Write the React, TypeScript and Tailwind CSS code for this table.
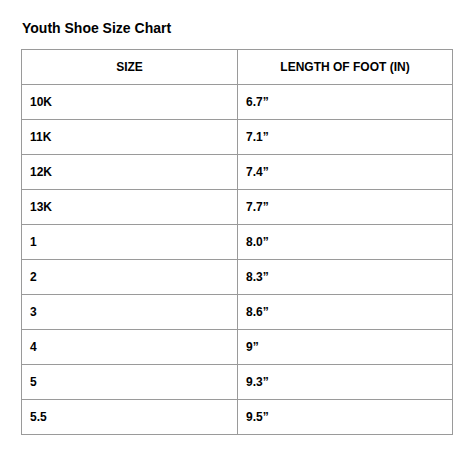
const rows: [string, string][] = [
  ["10K", "6.7\u201D"],
  ["11K", "7.1\u201D"],
  ["12K", "7.4\u201D"],
  ["13K", "7.7\u201D"],
  ["1", "8.0\u201D"],
  ["2", "8.3\u201D"],
  ["3", "8.6\u201D"],
  ["4", "9\u201D"],
  ["5", "9.3\u201D"],
  ["5.5", "9.5\u201D"],
];

export default function App() {
  return (
    <div className="w-[474px] h-[455px] bg-white text-black font-['Liberation_Sans',Arial,sans-serif]">
      <div className="pt-[19px] pl-[22px] text-[14px] font-bold leading-[18px]">Youth Shoe Size Chart</div>
      <table className="ml-[21px] mt-[12px] w-[432px] border-collapse table-fixed">
        <thead>
          <tr className="h-[35px]">
            <th className="w-[216px] border border-[#9a9a9a] text-[12px] font-bold text-center">SIZE</th>
            <th className="border border-[#9a9a9a] text-[12px] font-bold text-center">LENGTH OF FOOT (IN)</th>
          </tr>
        </thead>
        <tbody>
          {rows.map(([size, len]) => (
            <tr key={size} className="h-[35px]">
              <td className="border border-[#9a9a9a] pl-[8px] text-[12px] font-bold">{size}</td>
              <td className="border border-[#9a9a9a] pl-[8px] text-[12px] font-bold">{len}</td>
            </tr>
          ))}
        </tbody>
      </table>
    </div>
  );
}
